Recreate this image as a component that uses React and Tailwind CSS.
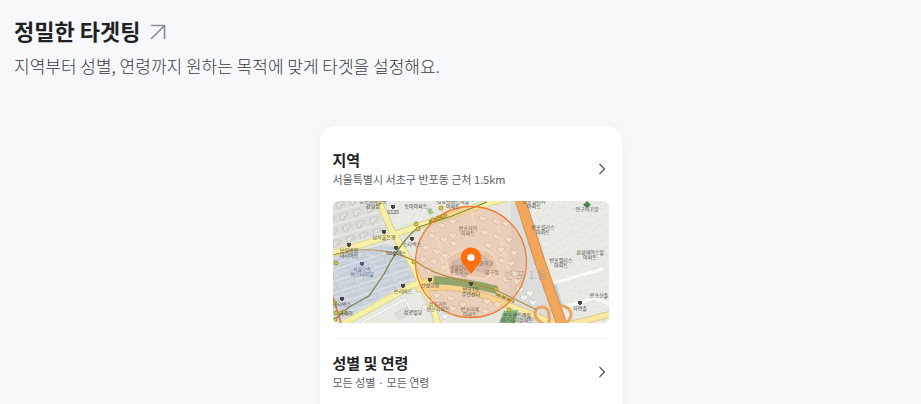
import React from "react";

const places = [
  { x: 40, y: 2, lines: ["뉴코아아울렛", "강남점"] },
  { x: 83, y: 7, lines: ["동아아파트"] },
  { x: 60, y: 13, lines: ["GS25"], mark: true },
  { x: 51, y: 38, lines: ["남서울은행"], mark: true },
  { x: 79, y: 45, lines: ["스타벅스"], mark: true },
  { x: 63, y: 54, lines: ["GS칼텍스"], mark: true },
  { x: 16, y: 51, lines: ["보람병원", "대리아만"], mark: true },
  { x: 29, y: 70, lines: ["서울고속", "버스터미널"], mark: true, color: "#4a5f8c" },
  { x: 9, y: 105, lines: ["스타벅스"], mark: true },
  { x: 13, y: 114, lines: ["아세아"] },
  { x: 70, y: 92, lines: ["쓰리버즈"], mark: true },
  { x: 80, y: 113, lines: ["삼광빌딩"] },
  { x: 120, y: 2, lines: ["강남역센트레빌", "아파트"] },
  { x: 135, y: 29, lines: ["반포자이", "아파트"], color: "#7a5b47" },
  { x: 126, y: 68, lines: ["서울원촌", "초등학교"], color: "#8a5a40" },
  { x: 151, y: 64, lines: ["원촌학교"], color: "#8a5a40" },
  { x: 159, y: 73, lines: ["유구정"], color: "#7a5b47" },
  { x: 97, y: 86, lines: ["신성교회"], mark: true },
  { x: 138, y: 90, lines: ["반포1동", "주민센터"], mark: true },
  { x: 105, y: 105, lines: ["삼호가든", "연산사파트"], color: "#5e554c" },
  { x: 137, y: 110, lines: ["반포미제", "아파트"], color: "#7a5b47" },
  { x: 184, y: 116, lines: ["반포센트레빌", "아스테리움파트"] },
  { x: 201, y: 2, lines: ["반포빌리지", "아파트"] },
  { x: 210, y: 28, lines: ["반포힐리스", "아파트"] },
  { x: 254, y: 10, lines: ["연구비공원"], color: "#4f5a4b" },
  { x: 257, y: 53, lines: ["삼성에이스빌", "아파트"] },
  { x: 228, y: 61, lines: ["반포펠리스", "아파트"] },
  { x: 266, y: 96, lines: ["반포산솔"] },
  { x: 247, y: 109, lines: ["자연솔"], mark: true },
];

const apartments = [
  [109, 24], [120, 20], [150, 17], [164, 20], [173, 22], [99, 34], [111, 38],
  [120, 34], [152, 31], [164, 35], [176, 38], [93, 46], [104, 50], [121, 42],
  [156, 44], [168, 48], [181, 51], [90, 58], [101, 60], [112, 54], [178, 62],
  [96, 69], [111, 66], [169, 59], [173, 78], [181, 72], [184, 80], [104, 94],
  [118, 97], [120, 107], [154, 100], [165, 103], [153, 110], [130, 103],
  [197, 92], [191, 96], [200, 101], [187, 88], [98, 99], [93, 106], [112, 115],
];

const stations = [
  [83, 23], [85, 28], [3, 62], [2, 102], [3, 112], [2, 119], [11, 111], [81, 61],
  [163, 88], [108, 7], [176, 109], [100, 19], [105, 17], [110, 15],
];

function MapView() {
  return (
    <svg
      viewBox="0 0 276 122"
      preserveAspectRatio="xMidYMid slice"
      className="block w-full rounded-md"
      role="img"
      aria-label="반포동 지도"
    >
      <defs>
        <pattern id="blocks" width="17" height="14" patternUnits="userSpaceOnUse" patternTransform="rotate(-28)">
          <rect width="17" height="14" fill="#ebebe6" />
          <path d="M0 1H17M1 0V14M9 1V14M1 8H17" stroke="#cfcfca" strokeWidth="2.2" />
          <path d="M0 1H17M1 0V14M9 1V14M1 8H17" stroke="#fafaf7" strokeWidth="1.2" />
        </pattern>
        <pattern id="estate" width="14" height="12" patternUnits="userSpaceOnUse" patternTransform="rotate(-16)">
          <rect width="14" height="12" fill="#dcdcd8" />
          <path d="M2 3H10V6H6V9H3Z" fill="#e6e6e2" stroke="#b9bab8" strokeWidth="0.8" />
          <path d="M0 11H14" stroke="#f1f1ed" strokeWidth="1" />
        </pattern>
        <pattern id="terminal" width="18" height="11" patternUnits="userSpaceOnUse" patternTransform="rotate(-18)">
          <rect width="18" height="11" fill="#d0d7e0" />
          <path d="M0 2H14V7H0M4 9H18" fill="none" stroke="#b6c0ce" strokeWidth="0.8" />
          <path d="M0 10.5H18" stroke="#e0e6ed" strokeWidth="0.8" />
        </pattern>
      </defs>

      {/* Land */}
      <rect width="276" height="122" fill="#e5e6df" />
      <path d="M0 0H44L57 28L0 48Z" fill="url(#estate)" />
      <path d="M50 0H108L95 18L62 26Z" fill="url(#blocks)" />
      <path d="M0 58L52 43L73 50L84 77L10 118L0 122Z" fill="url(#terminal)" />
      <path d="M18 122L84 86L100 122Z" fill="#e9e9e3" />
      <path d="M28 122L72 98L82 118L80 122" fill="none" stroke="#d2d2cc" strokeWidth="2.5" />
      <path d="M28 122L72 98L82 118L80 122" fill="none" stroke="#fbfbf8" strokeWidth="1.5" />
      <path d="M62 112L74 106L78 113L66 118Z" fill="#dddfe0" stroke="#c7cac9" strokeWidth="0.7" />
      <path d="M193 0H276V122H235Z" fill="url(#blocks)" />
      <path d="M178 0H187L229 122H176Z" fill="#dcdddb" />
      <path d="M219 84L223 82L230 105L225 106Z" fill="#c4cedd" />
      <path d="M217 83L270 68M227 107L262 97L276 103" fill="none" stroke="#fafaf7" strokeWidth="3" />
      <path d="M0 57Q36 44 58 58L80 63" fill="none" stroke="#c9ccce" strokeWidth="1" />
      <path d="M94 8L98 7L101 12L96 14Z" fill="#a4c893" />

      {/* Main roads */}
      <g fill="none" strokeLinecap="round" strokeLinejoin="round">
        <path d="M-2 53L60 34L97 21L150 4L174 -3" stroke="#d8d494" strokeWidth="7" />
        <path d="M45 -2L58 28L80 65L88 84L100 106L105 124" stroke="#d8d494" strokeWidth="7" />
        <path d="M8 124L80 84L103 78" stroke="#d8d494" strokeWidth="7" />
        <path d="M86 88Q125 83 146 93L183 107L225 124M235 124L278 113" stroke="#dacb8e" strokeWidth="7" />
        <path d="M-2 53L60 34L97 21L150 4L174 -3" stroke="#f6f1a6" strokeWidth="5" />
        <path d="M45 -2L58 28L80 65L88 84L100 106L105 124" stroke="#f6f1a6" strokeWidth="5" />
        <path d="M8 124L80 84L103 78" stroke="#f6f1a6" strokeWidth="5" />
        <path d="M86 88Q125 83 146 93L183 107L225 124M235 124L278 113" stroke="#f7e8a4" strokeWidth="5" />
        <path d="M137 2L141 23M98 29Q113 47 108 77M164 17Q169 54 181 83" stroke="#f4eee3" strokeWidth="2" />
      </g>

      {/* Apartment blocks */}
      <g fill="#f4f4f0" stroke="#bcbfbb" strokeWidth="0.6">
        {apartments.map(([x, y]) => (
          <path key={`${x}-${y}`} d="M-3 -2L-1 -3L0 -1L2 -2L4 0L2 2L0 4L-2 2L-4 1Z" transform={`translate(${x} ${y})`} />
        ))}
      </g>
      <path d="M113 58Q126 45 147 48Q164 50 165 69L151 78L116 72Z" fill="#dfd9cf" stroke="#f7f0e5" strokeWidth="1.5" />
      <path d="M119 61L143 50L160 62L154 72L141 69L132 76L119 71Z" fill="#c9c9cb" stroke="#b2b5b9" strokeWidth="0.7" />

      {/* Expressway */}
      <path d="M187 -2L207 61L229 124" fill="none" stroke="#d98e48" strokeWidth="11" />
      <path d="M187 -2L207 61L229 124" fill="none" stroke="#f2a65e" strokeWidth="9" />
      <g fill="none" stroke="#eba460" strokeWidth="3">
        <path d="M216 122C217 111 215 106 209 106C202 106 200 113 204 118Q208 122 213 125" />
        <path d="M225 106C231 103 239 108 238 115Q237 120 230 124" />
      </g>
      <path d="M250 4L254 0L258 4L254 7Z" fill="#478354" />

      {/* Target radius */}
      <circle cx="138" cy="61" r="55.5" fill="#ff8435" fillOpacity="0.22" />

      {/* Parks */}
      <path d="M101 75Q130 76 165 85L163 93Q132 84 100 83Z" fill="#93a56b" />
      <path d="M171 110L185 109L182 122H166Z" fill="#83b579" />

      {/* Subway lines */}
      <path d="M0 54Q42 41 82 60C94 69 106 74 132 80L163 89L204 109" fill="none" stroke="#b0893a" strokeWidth="1.1" />
      <path d="M1 119L16 106L36 95L51 73Q68 39 86 26L119 15L154 1" fill="none" stroke="#74864a" strokeWidth="1.3" />
      <path d="M96 21L114 14M163 93L181 101" stroke="#a19533" strokeWidth="3" strokeDasharray="5 1" />
      <path d="M0 96L8 122" stroke="#ef7139" strokeWidth="1.6" />
      <g fill="#d5ca38" stroke="#857e2d" strokeWidth="0.7">
        {stations.map(([x, y]) => (
          <circle key={`${x}-${y}`} cx={x} cy={y} r="2" />
        ))}
      </g>
      <circle cx="138" cy="61" r="55.5" fill="none" stroke="#f47b32" strokeWidth="1.3" />

      {/* Labels */}
      <text x="194" y="78" textAnchor="middle" fontSize="10" letterSpacing="3" fill="#a39b93" fillOpacity="0.65" className="font-['Noto_Sans_CJK_KR',sans-serif]">
        반포1동
      </text>
      {places.map(({ x, y, lines, mark, color = "#454541" }) => (
        <g key={`${x}-${y}`} fill={color} fontSize="5" textAnchor="middle" className="font-['Noto_Sans_CJK_KR',sans-serif]">
          {mark && <path d={`M${x - 2} ${y - 9}h4v3h-1v1h-2v-1h-1z`} />}
          {lines.map((line, i) => (
            <text key={line} x={x} y={y + i * 5}>
              {line}
            </text>
          ))}
        </g>
      ))}

      {/* Pin */}
      <path d="M138 73L131.5 64.5C125 61 127 46.5 138 46.5S151 61 144.5 64.5Z" fill="#ff6f0f" />
      <circle cx="138" cy="56.5" r="3.6" fill="#fff" />
    </svg>
  );
}

function SettingRow({ title, value }) {
  return (
    <button type="button" className="flex w-full items-center justify-between text-left">
      <span className="block">
        <span className="block text-[15px] leading-5 font-bold text-[#212124]">{title}</span>
        <span className="block text-[11px] leading-[18px] text-[#5c5f66]">{value}</span>
      </span>
      <svg width="14" height="14" viewBox="0 0 14 14" fill="none" stroke="#4d5159" strokeWidth="1.2" aria-hidden="true">
        <path d="M4.5 2L9.5 7L4.5 12" />
      </svg>
    </button>
  );
}

export default function App() {
  return (
    <main className="h-screen overflow-hidden bg-[#f7f8fa] pt-[14px] font-['Noto_Sans_CJK_KR',sans-serif]">
      <h2 className="px-[14px] text-[22px] leading-8 font-bold text-[#212124]">
        <a href="#targeting" className="flex items-center gap-1.5">
          정밀한 타겟팅
          <svg width="22" height="22" viewBox="0 0 22 22" fill="none" stroke="#868b94" strokeWidth="1.6" aria-hidden="true">
            <path d="M5 6.5H18.5V20M18 7L5 20" />
          </svg>
        </a>
      </h2>
      <p className="mt-1.5 px-[14px] text-[17px] leading-7 font-light text-[#393a40]">
        지역부터 성별, 연령까지 원하는 목적에 맞게 타겟을 설정해요.
      </p>

      <div className="mt-[46px] flex justify-center pl-5">
        <section className="w-full max-w-[302px] rounded-2xl bg-white px-[13px] pt-6 pb-10 shadow-[0_0_14px_rgba(0,0,0,0.03)]">
          <SettingRow title="지역" value="서울특별시 서초구 반포동 근처 1.5km" />
          <div className="mt-[13px] border-b border-[#f2f3f6] pb-[15px]">
            <MapView />
          </div>
          <div className="pt-[14px]">
            <SettingRow title="성별 및 연령" value="모든 성별 · 모든 연령" />
          </div>
        </section>
      </div>
    </main>
  );
}
